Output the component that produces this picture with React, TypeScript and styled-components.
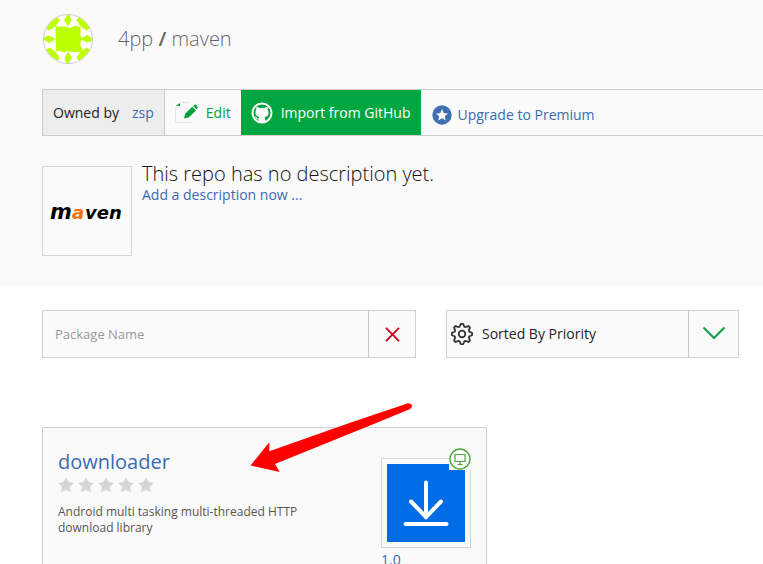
import React from "react";
import styled, { createGlobalStyle } from "styled-components";

const GlobalStyle = createGlobalStyle`
  *, *::before, *::after { box-sizing: border-box; }
  body {
    margin: 0;
    background: #fff;
    color: #222;
    font: 14px/20px "Open Sans", "Noto Sans", sans-serif;
  }
  button, input, select { font: inherit; color: inherit; }
  a { color: #3b6bb0; text-decoration: none; }
  svg { display: block; flex: none; }
`;

const Page = styled.div`
  height: 100vh;
  overflow: hidden;
`;

const Header = styled.header`
  background: #fafafa;
  padding: 14px 0 30px 42px;
`;

const TitleRow = styled.div`
  display: flex;
  align-items: center;
  gap: 24px;
  height: 50px;
`;

const RepoTitle = styled.h1`
  margin: 0;
  font-size: 20px;
  line-height: 28px;
  font-weight: 300;
  color: #666;
  b { font-weight: 600; }
`;

const Toolbar = styled.nav`
  display: flex;
  height: 47px;
  margin-top: 25px;
  border: 1px solid #ccc;
  border-right: 0;
`;

const Owner = styled.div`
  display: flex;
  align-items: center;
  gap: 13px;
  padding: 0 10px;
  background: #ededed;
  border-right: 1px solid #ccc;
`;

const ToolButton = styled.button<{ $primary?: boolean }>`
  display: flex;
  align-items: center;
  gap: 8px;
  padding: 0 10px;
  border: 0;
  background: ${(p) => (p.$primary ? "#00a63f" : "transparent")};
  color: ${(p) => (p.$primary ? "#fff" : "#00a03c")};
  cursor: pointer;
`;

const UpgradeLink = styled.a`
  display: flex;
  align-items: center;
  gap: 6px;
  padding: 4px 0 0 11px;
`;

const About = styled.section`
  display: flex;
  gap: 10px;
  margin-top: 30px;
`;

const RepoLogo = styled.div`
  display: grid;
  place-items: center;
  width: 90px;
  height: 90px;
  border: 1px solid #d4d4d4;
`;

const Description = styled.div`
  display: flex;
  flex-direction: column;
  p {
    margin: -4px 0 -1px;
    font-size: 20px;
    line-height: 24px;
    font-weight: 300;
    color: #111;
  }
`;

const Filters = styled.form`
  display: grid;
  grid-template-columns: 374fr 293fr;
  gap: 30px;
  padding: 24px 24px 0 42px;
`;

const Field = styled.div`
  display: flex;
  align-items: center;
  height: 48px;
  border: 1px solid #d0d0d0;
  background: #fafafa;
`;

const SearchInput = styled.input`
  flex: 1;
  min-width: 0;
  height: 100%;
  padding: 0 12px;
  border: 0;
  background: none;
  font-size: 13px;
  &::placeholder { color: #999; opacity: 1; }
`;

const FieldButton = styled.button<{ $wide?: boolean }>`
  display: grid;
  place-items: center;
  width: ${(p) => (p.$wide ? 50 : 47)}px;
  height: 100%;
  padding: 0;
  border: 0;
  border-left: 1px solid #c4c4c4;
  background: none;
`;

const SortLabel = styled.label`
  display: flex;
  align-items: center;
  gap: 9px;
  flex: 1;
  height: 100%;
  padding-left: 4px;
`;

const SortSelect = styled.select`
  flex: 1;
  height: 100%;
  padding: 0;
  border: 0;
  appearance: none;
  background: none;
`;

const Results = styled.main`
  padding: 69px 24px 0 42px;
`;

const Card = styled.article`
  position: relative;
  display: flex;
  justify-content: space-between;
  max-width: 445px;
  min-height: 180px;
  padding: 20px 15px;
  border: 1px solid #d0d0d0;
  background: #fafafa;
`;

const CardText = styled.div`
  width: 260px;
  h2 {
    margin: 0;
    font-size: 20px;
    line-height: 28px;
    font-weight: 400;
  }
  p {
    margin: 11px 0 0;
    font-size: 12px;
    line-height: 16px;
    color: #555;
  }
`;

const Stars = styled.div`
  display: flex;
  gap: 4px;
  padding-top: 1px;
`;

const CardAside = styled.div`
  padding-top: 10px;
`;

const PackageIcon = styled.div`
  position: relative;
  display: grid;
  place-items: center;
  width: 90px;
  height: 90px;
  margin-bottom: 2px;
  border: 1px solid #d4d4d4;
`;

const Badge = styled.span`
  position: absolute;
  top: -11px;
  right: -1px;
  background: #fafafa;
`;

const Pointer = styled.svg`
  position: absolute;
  left: 207px;
  top: -27px;
  pointer-events: none;
`;

const STAR = "M8 .3l2.500 4.700 5.300.9-3.700 3.900.7 5.400L8 13l-4.800 2.200.7-5.400L.2 5.900l5.300-.9z";

const Avatar = () => (
  <svg width="52" height="50" viewBox="0 0 52 50" role="img" aria-label="4pp">
    <defs>
      <clipPath id="round"><circle cx="26" cy="25" r="24" /></clipPath>
      <g id="edge">
        <path d="M13.500 0l4 6.500-4 6zM26 0l-4 6 4 6.500 3.500-6.500-2-6zM38.500 0l-4 6 4 6.500 5-5V0zM13.500 12.500L8 9l4-8 1.500-1z" />
      </g>
    </defs>
    <circle cx="26" cy="25" r="24.500" fill="#fff" stroke="#ccc" />
    <g clipPath="url(#round)" fill="#bf0">
      <path d="M13.500 12.500H24l4 1.500 6-2.500 4.500 2V22l2 3-2 3v4l2 3-2 3h-8l-5-1-4 1.500-3-1.500h-4.500z" />
      {[0, 90, 180, 270].map((turn) => (
        <use key={turn} href="#edge" transform={`rotate(${turn} 26 25)`} />
      ))}
    </g>
  </svg>
);

const gearPath = Array.from({ length: 64 }, (_, i) => {
  const angle = (i / 64) * Math.PI * 2;
  const radius = 9 + 1.3 * Math.tanh(2.5 * Math.cos(angle * 8));
  return `${i ? "L" : "M"}${(11 + radius * Math.sin(angle)).toFixed(2)} ${(11 - radius * Math.cos(angle)).toFixed(2)}`;
}).join("") + "Z";

export default function App() {
  return (
    <Page>
      <GlobalStyle />
      <Header>
        <TitleRow>
          <Avatar />
          <RepoTitle>4pp <b>/</b> maven</RepoTitle>
        </TitleRow>
        <Toolbar>
          <Owner>Owned by <a href="#owner">zsp</a></Owner>
          <ToolButton type="button">
            <svg width="23" height="22" viewBox="0 0 23 22">
              <path d="M.5 5v15.500H17M5 .5h9" fill="none" stroke="#dcebdc" />
              <path d="M1 4l4-3v3z" fill="#00a03c" />
              <path d="M9 16.500l1.300-5 7-6.700 3.600 3.600-6.900 6.800zM18.100 4l1-1q1-.8 2 0l1.300 1.400q.8 1 0 1.900l-.9.9z" fill="#00a03c" />
            </svg>
            Edit
          </ToolButton>
          <ToolButton type="button" $primary>
            <svg width="22" height="22" viewBox="0 0 22 22">
              <circle cx="11" cy="11" r="9.500" fill="none" stroke="#fff" strokeWidth="2" />
              <path d="M5.500 5q2 0 3.500 1.200 2-.4 4 0Q14.500 5 16.500 5q.6 1.400.2 2.800 1.200 1.600.8 3.600-.6 3.200-4 3.800.6.8.6 2V20H8v-2.500q-2.500.3-3.500-1.700l-.8-1.200q1.300-.2 2 1 1 1.200 2.300.7 0-.7.5-1.300-3.600-.6-4-3.800-.3-2 .8-3.400-.4-1.400.2-2.800z" fill="#fff" />
            </svg>
            Import from GitHub
          </ToolButton>
          <UpgradeLink href="#premium">
            <svg width="20" height="20" viewBox="0 0 20 20">
              <circle cx="10" cy="10" r="9.700" fill="#3f6fb0" />
              <path d="M10 4l1.700 4.200 4.400.3-3.400 2.800 1.100 4.300L10 13.200l-3.800 2.400 1.100-4.300-3.400-2.800 4.400-.3z" fill="#fff" />
            </svg>
            Upgrade to Premium
          </UpgradeLink>
        </Toolbar>
        <About>
          <RepoLogo>
            <svg width="76" height="24" viewBox="0 0 76 24" role="img" aria-label="maven" fontFamily="DejaVu Sans" fontWeight="700" fontStyle="italic">
              <text x="1" y="20" fontSize="21">m</text>
              <text x="23" y="20" fontSize="18" fill="#f07000">a</text>
              <text x="36" y="20" fontSize="18">ven</text>
            </svg>
          </RepoLogo>
          <Description>
            <p>This repo has no description yet.</p>
            <a href="#describe">Add a description now ...</a>
          </Description>
        </About>
      </Header>
      <Filters>
        <Field>
          <SearchInput aria-label="Package Name" placeholder="Package Name" />
          <FieldButton type="reset" aria-label="Clear">
            <svg width="15" height="15" viewBox="0 0 16 16">
              <path d="M1 1l14 14M15 1L1 15" stroke="#d0021b" strokeWidth="2" />
            </svg>
          </FieldButton>
        </Field>
        <Field>
          <SortLabel>
            <svg width="22" height="22" viewBox="0 0 22 22" fill="none" stroke="#333" strokeWidth="1.800">
              <path d={gearPath} />
              <circle cx="11" cy="11" r="3.300" />
            </svg>
            <SortSelect aria-label="Sort order">
              <option>Sorted By Priority</option>
              <option>Sorted By Name</option>
            </SortSelect>
          </SortLabel>
          <FieldButton type="button" $wide aria-label="Show sort options">
            <svg width="24" height="18" viewBox="0 0 24 18">
              <path d="M1.500 2.500L12 13 22.500 2.500" fill="none" stroke="#14a04a" strokeWidth="2.200" />
            </svg>
          </FieldButton>
        </Field>
      </Filters>
      <Results>
        <Card>
          <CardText>
            <h2><a href="#downloader">downloader</a></h2>
            <Stars role="img" aria-label="Not rated">
              {[0, 1, 2, 3, 4].map((n) => (
                <svg key={n} width="16" height="16" viewBox="0 0 16 16"><path d={STAR} fill="#d6d6d6" /></svg>
              ))}
            </Stars>
            <p>Android multi tasking multi-threaded HTTP download library</p>
          </CardText>
          <CardAside>
            <PackageIcon>
              <svg width="78" height="78" viewBox="0 0 78 78">
                <path d="M0 0h78v78H0z" fill="#006ce5" />
                <path d="M39 18.500v35M24 37.500l15 15.500 15-15.500M18.500 60h41" fill="none" stroke="#fff" strokeWidth="4" strokeLinecap="round" strokeLinejoin="round" />
              </svg>
              <Badge>
                <svg width="22" height="22" viewBox="0 0 22 22" fill="none" stroke="#4aa83a">
                  <circle cx="11" cy="11" r="10" strokeWidth="1.400" />
                  <path d="M6 6.500h10v7H6zM11 13.500v2.500M8.500 16.500h5" strokeWidth="1.200" />
                </svg>
              </Badge>
            </PackageIcon>
            <a href="#version">1.0</a>
          </CardAside>
          <Pointer width="164" height="72" viewBox="0 0 164 72" aria-hidden="true">
            <path d="M.5 64.500L19.300 41.300v9L103 20.700 158 2.300q4 0 4 3.200-.5 2-3 3L117 25.700 25 63l4.700 8z" fill="#fe0000" />
          </Pointer>
        </Card>
      </Results>
    </Page>
  );
}
